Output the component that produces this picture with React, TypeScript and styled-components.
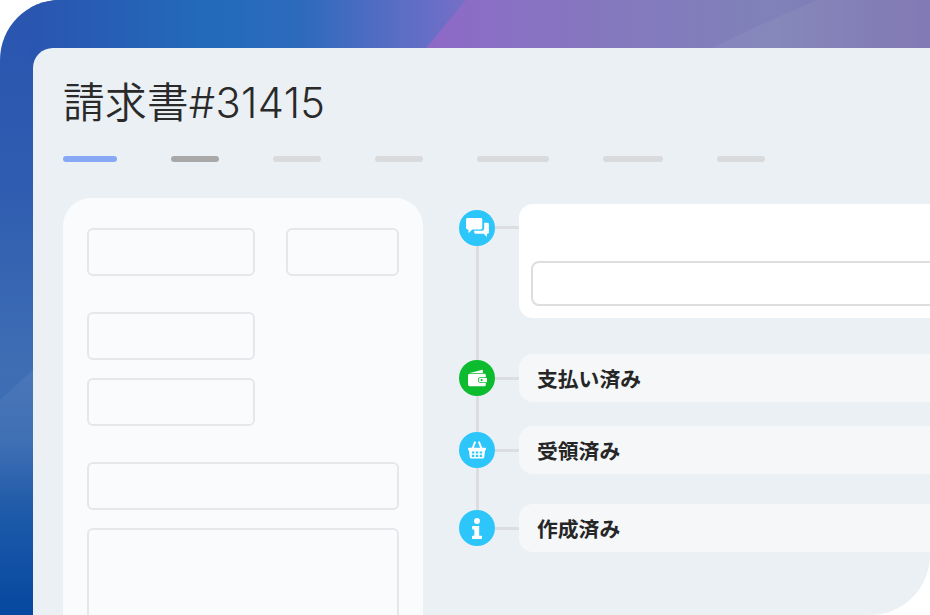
import React from "react"
import { createGlobalStyle, styled } from "styled-components"

const GlobalStyle = createGlobalStyle`
  html, body {
    margin: 0;
    padding: 0;
    background: #fff;
    overflow: hidden;
  }
  * {
    box-sizing: border-box;
  }
`

const tabs = [
  { width: 54, color: "#86a8f5" },
  { width: 48, color: "#a8a8a8" },
  { width: 48, color: "#d9dadc" },
  { width: 48, color: "#d9dadc" },
  { width: 72, color: "#d9dadc" },
  { width: 60, color: "#d9dadc" },
  { width: 48, color: "#d9dadc" },
]

const BackdropArt = () => (
  <Backdrop viewBox="0 0 930 615" width="930" height="615">
    <defs>
      <linearGradient id="top" x1="0" x2="1" y1="0" y2="0">
        <stop offset="0" stopColor="#2a55b0" />
        <stop offset="0.2" stopColor="#226bba" />
        <stop offset="0.3" stopColor="#2d6abc" />
        <stop offset="0.4" stopColor="#566dc4" />
        <stop offset="0.5" stopColor="#7c6fc8" />
        <stop offset="1" stopColor="#7f72b0" />
      </linearGradient>
      <linearGradient id="purple" x1="0" x2="1" y1="0" y2="0">
        <stop offset="0" stopColor="#8e68c8" />
        <stop offset="0.35" stopColor="#8577bf" />
        <stop offset="0.7" stopColor="#7f82b8" />
        <stop offset="1" stopColor="#7c72b0" />
      </linearGradient>
      <linearGradient id="left" x1="0" x2="0" y1="0" y2="1">
        <stop offset="0" stopColor="#2a55b0" />
        <stop offset="0.3" stopColor="#2f5cb0" />
        <stop offset="0.6" stopColor="#3f6eb4" />
        <stop offset="0.72" stopColor="#3a6bb2" />
        <stop offset="0.85" stopColor="#1a58a8" />
        <stop offset="1" stopColor="#0648a0" />
      </linearGradient>
      <linearGradient id="leftFacet" x1="0" x2="0" y1="0" y2="1">
        <stop offset="0" stopColor="#fff" stopOpacity="0.06" />
        <stop offset="1" stopColor="#fff" stopOpacity="0" />
      </linearGradient>
    </defs>
    <rect width="60" height="615" fill="url(#left)" />
    <rect x="30" width="900" height="60" fill="url(#top)" />
    <path d="M466 0 L416 60 L930 60 L930 0 Z" fill="url(#purple)" />
    <path d="M712 48 Q765 22 817 0 L930 0 L930 48 Z" fill="#fff" opacity="0.05" />
    <path d="M0 400 L33 370 L33 500 L0 500 Z" fill="url(#leftFacet)" />
  </Backdrop>
)

const App: React.FC = () => {
  return (
    <Frame>
      <GlobalStyle />
      <BackdropArt />
      <Panel>
        <Title>請求書#31415</Title>
        <Tabs>
          {tabs.map((tab, i) => (
            <Tab key={i} $width={tab.width} $color={tab.color} />
          ))}
        </Tabs>
        <Columns>
          <FormCard>
            <FieldRow>
              <Field $width={168} />
              <Field $width={113} />
            </FieldRow>
            <FieldRow $gap={36}>
              <Field $width={168} />
            </FieldRow>
            <FieldRow $gap={18}>
              <Field $width={168} />
            </FieldRow>
            <FieldRow $gap={36}>
              <Field $width={312} />
            </FieldRow>
            <FieldRow $gap={18}>
              <TextArea />
            </FieldRow>
          </FormCard>
          <Timeline>
            <Rail />
            <CommentRow>
              <Node $color="#2dc6fb">
                <svg width="23" height="20" viewBox="0 0 24 21" fill="#fff">
                  <path d="M1.500 0h14A1.500 1.500 0 0 1 17 1.500v9a1.500 1.500 0 0 1-1.500 1.500H6.500L2.500 16v-4h-1A1.500 1.500 0 0 1 0 10.500v-9A1.500 1.500 0 0 1 1.500 0z" />
                  <path d="M19 5h3.500A1.500 1.500 0 0 1 24 6.500V15a1.500 1.500 0 0 1-1.500 1.500H22V20l-3.500-3.500H10A1.500 1.500 0 0 1 8.500 15v-1.500h8A2.500 2.500 0 0 0 19 11z" />
                </svg>
              </Node>
              <Connector />
              <CommentCard>
                <CommentInput />
              </CommentCard>
            </CommentRow>
            <StatusRow $gap={36}>
              <Node $color="#0dbb2f">
                <svg width="19" height="18" viewBox="0 0 23 20" fill="#fff">
                  <path d="M1 4.200 16.500.2c.8-.2 1.500.3 1.500 1.100V4H3.200z" />
                  <path d="M2 5h18a1.500 1.500 0 0 1 1.500 1.500V9H15a3 3 0 0 0-3 3v1a3 3 0 0 0 3 3h6.500v2.500A1.500 1.500 0 0 1 20 20H2a2 2 0 0 1-2-2V7a2 2 0 0 1 2-2z" />
                  <path fillRule="evenodd" d="M15 10h8v5h-8a2 2 0 0 1-2-2v-1a2 2 0 0 1 2-2zm1.500 1.200a1.300 1.300 0 1 0 0 2.600 1.300 1.300 0 0 0 0-2.600z" />
                </svg>
              </Node>
              <Connector />
              <StatusCard>支払い済み</StatusCard>
            </StatusRow>
            <StatusRow $gap={24}>
              <Node $color="#2dc6fb">
                <svg width="18" height="18" viewBox="0 0 20 20" fill="#fff">
                  <path d="M3.700 8.500 7 .4l2 .8-2.900 7.300zM16.300 8.500 13 .4l-2 .8 2.900 7.300z" />
                  <path
                    fillRule="evenodd"
                    d="M.8 7.500h18.400a.8.8 0 0 1 .8.800v1.100a.8.8 0 0 1-.8.800H19l-1 7.800a1.700 1.700 0 0 1-1.700 1.500H3.700A1.700 1.700 0 0 1 2 18.000l-1-7.800H.8a.8.8 0 0 1-.8-.8V8.300a.8.8 0 0 1 .8-.8zM4.300 11.600v2.400h2.700v-2.400zm4.300 0v2.400h2.800v-2.400zm4.400 0v2.400h2.700v-2.400zM4.300 15.400v2.300h2.700v-2.300zm4.300 0v2.300h2.800v-2.300zm4.400 0v2.300h2.700v-2.300z"
                  />
                </svg>
              </Node>
              <Connector />
              <StatusCard>受領済み</StatusCard>
            </StatusRow>
            <StatusRow $gap={30}>
              <Node $color="#2dc6fb">
                <svg width="10" height="21" viewBox="0 0 10 21" fill="#fff">
                  <circle cx="5" cy="3" r="3" />
                  <path d="M.8 8h6.400v9.800H9.300a.7.7 0 0 1 .7.700v1.800a.7.700 0 0 1-.7.700H.7a.7.7 0 0 1-.7-.7v-1.800a.7.7 0 0 1 .7-.7h1.600v-6.300H.8a.7.7 0 0 1-.7-.7V8.700A.7.700 0 0 1 .8 8z" />
                </svg>
              </Node>
              <Connector />
              <StatusCard>作成済み</StatusCard>
            </StatusRow>
          </Timeline>
        </Columns>
      </Panel>
    </Frame>
  )
}

const Frame = styled.div`
  position: relative;
  width: 930px;
  height: 615px;
  padding: 48px 0 0 33px;
  border-radius: 60px 0 0 0;
  overflow: hidden;
`

const Backdrop = styled.svg`
  position: absolute;
  top: 0;
  left: 0;
  display: block;
`

const Panel = styled.main`
  position: relative;
  height: 567px;
  padding: 30px 0 0 30px;
  background: #ebf0f4;
  border-radius: 20px 0 60px 0;
  overflow: hidden;
  font-family: "Inter", "Noto Sans CJK JP", sans-serif;
`

const Title = styled.h1`
  margin: 0;
  height: 48px;
  font-size: 41.6px;
  line-height: 50px;
  font-weight: 350;
  letter-spacing: 0.35px;
  color: #2a2a2a;
  white-space: nowrap;
`

const Tabs = styled.div`
  display: flex;
  gap: 54px;
  margin-top: 30px;
`

const Tab = styled.div<{ $width: number; $color: string }>`
  width: ${({ $width }) => $width}px;
  height: 6px;
  border-radius: 3px;
  background: ${({ $color }) => $color};
`

const Columns = styled.div`
  display: flex;
  gap: 36px;
  margin-top: 36px;
`

const FormCard = styled.section`
  flex: none;
  width: 360px;
  height: 460px;
  padding: 30px 24px 0;
  background: #fafbfd;
  border-radius: 28px;
`

const FieldRow = styled.div<{ $gap?: number }>`
  display: flex;
  justify-content: space-between;
  margin-top: ${({ $gap }) => $gap ?? 0}px;
`

const Field = styled.div<{ $width: number }>`
  width: ${({ $width }) => $width}px;
  height: 48px;
  border: 2px solid #e5e7ea;
  border-radius: 6px;
`

const TextArea = styled.div`
  width: 312px;
  height: 200px;
  border: 2px solid #e5e7ea;
  border-radius: 6px;
`

const Timeline = styled.section`
  position: relative;
  flex: 1;
  min-width: 0;
  padding-top: 6px;
  margin-right: -40px;
`

const Rail = styled.div`
  position: absolute;
  top: 30px;
  left: 17px;
  width: 3px;
  height: 300px;
  background: #dcdde0;
`

const CommentRow = styled.div`
  display: flex;
  align-items: flex-start;
`

const StatusRow = styled.div<{ $gap: number }>`
  display: flex;
  align-items: center;
  margin-top: ${({ $gap }) => $gap}px;
`

const Node = styled.div<{ $color: string }>`
  position: relative;
  flex: none;
  display: flex;
  align-items: center;
  justify-content: center;
  width: 36px;
  height: 36px;
  border-radius: 50%;
  background: ${({ $color }) => $color};
  ${CommentRow} & {
    margin-top: 6px;
  }
`

const Connector = styled.div`
  flex: none;
  width: 24px;
  height: 3px;
  background: #dcdde0;
  ${CommentRow} & {
    margin-top: 22px;
  }
`

const CommentCard = styled.div`
  flex: 1;
  height: 114px;
  padding: 57px 12px 0;
  background: #fff;
  border-radius: 14px;
`

const CommentInput = styled.div`
  height: 45px;
  background: #fff;
  border: 2px solid #dddedf;
  border-radius: 8px;
`

const StatusCard = styled.div`
  flex: 1;
  height: 48px;
  padding-left: 18px;
  background: #f5f7f9;
  border-radius: 14px;
  font-size: 20.8px;
  line-height: 51px;
  font-weight: 700;
  color: #262626;
`

export default App
